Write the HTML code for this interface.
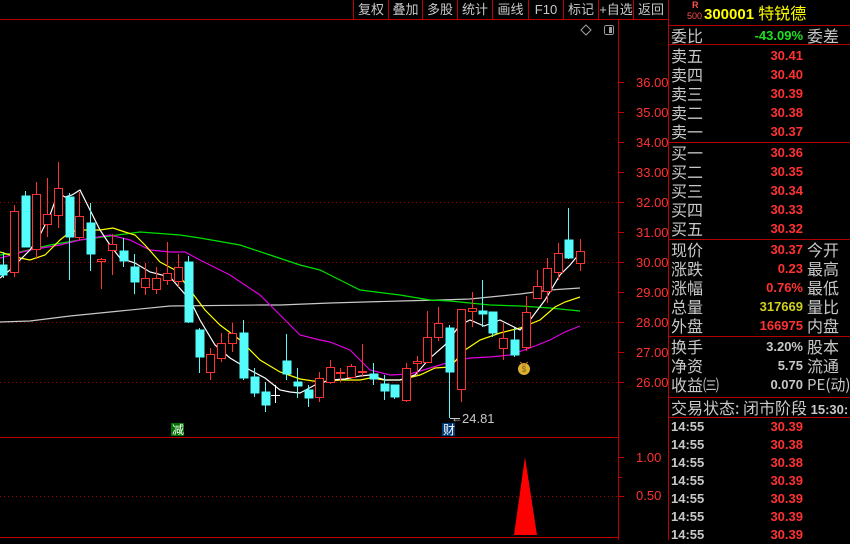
<!DOCTYPE html>
<html><head><meta charset="utf-8"><style>
body{margin:0;background:#000;width:850px;height:540px;overflow:hidden;position:relative;font-family:"Liberation Sans","Noto Sans CJK SC",sans-serif}
.t{position:absolute;white-space:nowrap}
.l{position:absolute;left:671px;color:#c8c8c8;font-size:16px;line-height:19px;font-family:"Noto Sans CJK SC","WenQuanYi Zen Hei",sans-serif}
.v{position:absolute;right:47px;font-size:13px;font-weight:bold;line-height:19px;color:#ff3232;text-align:right}
.r{position:absolute;left:807px;color:#c8c8c8;font-size:16px;line-height:19px;font-family:"Noto Sans CJK SC",sans-serif}
.hl{position:absolute;left:669px;width:181px;height:1px;background:#b00000}
.btn{position:absolute;top:0;height:19px;line-height:19px;color:#c8c8c8;font-size:13px;text-align:center;border-left:1px solid #c00000;font-family:"Liberation Sans","Noto Sans CJK SC",sans-serif}
.ax{position:absolute;left:636px;color:#ff3232;font-size:13px;line-height:14px}
.tk{position:absolute;left:671px;color:#c8c8c8;font-size:13px;font-weight:bold;line-height:18px}
.tv{position:absolute;right:47px;color:#ff3232;font-size:13px;font-weight:bold;line-height:18px}
</style></head><body>
<svg width="850" height="540" style="position:absolute;left:0;top:0" shape-rendering="crispEdges">
<line x1="0" y1="19.5" x2="668" y2="19.5" stroke="#c00000"/>
<line x1="618.5" y1="20" x2="618.5" y2="540" stroke="#c00000"/>
<line x1="668.5" y1="0" x2="668.5" y2="540" stroke="#c00000"/>
<line x1="0" y1="437.5" x2="618" y2="437.5" stroke="#c00000"/>
<line x1="0" y1="537.5" x2="618" y2="537.5" stroke="#c00000"/>
<g stroke="#a00000" stroke-dasharray="1,3">
<line x1="0" y1="202.5" x2="618" y2="202.5"/><line x1="0" y1="262.5" x2="618" y2="262.5"/>
<line x1="0" y1="322.5" x2="618" y2="322.5"/><line x1="0" y1="382.5" x2="618" y2="382.5"/>
<line x1="0" y1="496.5" x2="618" y2="496.5"/>
</g>
<g stroke="#c00000">
<line x1="618" y1="82.5" x2="624" y2="82.5"/><line x1="618" y1="112.5" x2="624" y2="112.5"/><line x1="618" y1="142.5" x2="624" y2="142.5"/><line x1="618" y1="172.5" x2="624" y2="172.5"/><line x1="618" y1="202.5" x2="624" y2="202.5"/><line x1="618" y1="232.5" x2="624" y2="232.5"/><line x1="618" y1="262.5" x2="624" y2="262.5"/><line x1="618" y1="292.5" x2="624" y2="292.5"/><line x1="618" y1="322.5" x2="624" y2="322.5"/><line x1="618" y1="352.5" x2="624" y2="352.5"/><line x1="618" y1="382.5" x2="624" y2="382.5"/>
<line x1="618" y1="457.5" x2="624" y2="457.5"/><line x1="618" y1="477.5" x2="622" y2="477.5"/><line x1="618" y1="496.5" x2="624" y2="496.5"/>
</g>
<g fill="none" shape-rendering="auto" stroke-width="1.2">
<polyline stroke="#c8c8c8" points="0,322 30,321 70,316 120,311 170,306 260,305 280,305 330,303 400,301 440,300 470,299 500,296 520,294 550,290 580,288"/>
<polyline stroke="#00e000" points="0,255 20,252 50,245 80,240 140,232 180,235 200,238 240,245 270,255 300,265 320,270 340,280 360,290 400,295 430,300 450,301 470,303 490,305 520,306 550,308 580,311"/>
<polyline stroke="#e000e0" points="0,258 30,250 60,245 80,240 110,235 130,240 150,250 170,252 185,252 200,260 230,275 260,295 280,315 300,335 320,340 330,342 350,350 370,370 390,375 410,374 430,368 450,362 470,358 490,357 510,355 530,348 550,340 565,332 580,326"/>
<polyline stroke="#ffff00" points="0,252 20,258 30,260 45,255 60,240 70,232 80,230 100,230 113,228 125,232 135,235 145,245 160,262 175,270 190,290 205,310 220,325 240,340 260,360 280,372 300,379 320,382 340,380 360,380 370,378 385,380 400,380 420,375 435,368 450,367 465,350 480,340 500,333 520,328 540,320 555,307 565,302 580,297"/>
<polyline stroke="#ffffff" points="0,278 10,270 20,260 30,250 40,235 50,215 58,193 65,197 72,195 80,190 90,210 100,230 110,245 120,258 135,263 150,272 170,277 190,300 200,320 215,345 230,358 250,370 265,378 280,390 290,392 300,393 315,385 330,380 345,379 360,376 370,375 385,380 400,380 415,375 430,358 445,345 460,325 470,320 484,326 500,320 510,325 520,330 530,320 545,300 560,275 570,265 580,253"/>
</g>
<g stroke="#54fcfc" fill="#54fcfc">
<line x1="3.5" y1="252" x2="3.5" y2="278"/><rect x="0" y="265" width="7" height="10"/>
<line x1="25.5" y1="191" x2="25.5" y2="247"/><rect x="22" y="196" width="8" height="51"/>
<line x1="69.5" y1="193" x2="69.5" y2="280"/><rect x="66" y="197" width="8" height="40"/>
<line x1="90.5" y1="203" x2="90.5" y2="271"/><rect x="87" y="223" width="8" height="31"/>
<line x1="123.5" y1="238" x2="123.5" y2="267"/><rect x="120" y="251" width="8" height="10"/>
<line x1="134.5" y1="254" x2="134.5" y2="294"/><rect x="131" y="267" width="8" height="15"/>
<line x1="188.5" y1="256" x2="188.5" y2="323"/><rect x="185" y="262" width="8" height="60"/>
<line x1="199.5" y1="328" x2="199.5" y2="373"/><rect x="196" y="330" width="8" height="27"/>
<line x1="243.5" y1="320" x2="243.5" y2="380"/><rect x="240" y="333" width="8" height="45"/>
<line x1="254.5" y1="368" x2="254.5" y2="397"/><rect x="251" y="377" width="8" height="16"/>
<line x1="265.5" y1="382" x2="265.5" y2="412"/><rect x="262" y="392" width="8" height="13"/>
<line x1="286.5" y1="334" x2="286.5" y2="380"/><rect x="283" y="361" width="8" height="13"/>
<line x1="297.5" y1="368" x2="297.5" y2="398"/><rect x="294" y="382" width="8" height="4"/>
<line x1="308.5" y1="385" x2="308.5" y2="407"/><rect x="305" y="390" width="8" height="8"/>
<line x1="373.5" y1="363" x2="373.5" y2="385"/><rect x="370" y="374" width="8" height="5"/>
<line x1="384.5" y1="375" x2="384.5" y2="400"/><rect x="381" y="384" width="8" height="7"/>
<line x1="394.5" y1="385" x2="394.5" y2="399"/><rect x="391" y="385" width="8" height="12"/>
<line x1="449.5" y1="325" x2="449.5" y2="418"/><rect x="446" y="328" width="8" height="44"/>
<line x1="482.5" y1="280" x2="482.5" y2="327"/><rect x="479" y="311" width="8" height="3"/>
<line x1="492.5" y1="312" x2="492.5" y2="337"/><rect x="489" y="312" width="8" height="21"/>
<line x1="514.5" y1="328" x2="514.5" y2="357"/><rect x="511" y="340" width="8" height="15"/>
<line x1="568.5" y1="208" x2="568.5" y2="259"/><rect x="565" y="240" width="8" height="18"/>
</g>
<g stroke="#ff3232" fill="#000">
<line x1="14.5" y1="205" x2="14.5" y2="277"/><rect x="10.5" y="211.5" width="8" height="61"/>
<line x1="36.5" y1="182" x2="36.5" y2="259"/><rect x="32.5" y="194.5" width="8" height="55"/>
<line x1="47.5" y1="178" x2="47.5" y2="237"/><rect x="43.5" y="214.5" width="8" height="10"/>
<line x1="58.5" y1="162" x2="58.5" y2="228"/><rect x="54.5" y="188.5" width="8" height="27"/>
<line x1="79.5" y1="192" x2="79.5" y2="240"/><rect x="75.5" y="216.5" width="8" height="21"/>
<line x1="101.5" y1="258" x2="101.5" y2="289"/><rect x="97.5" y="259.5" width="8" height="2"/>
<line x1="112.5" y1="234" x2="112.5" y2="275"/><rect x="108.5" y="244.5" width="8" height="6"/>
<line x1="145.5" y1="263" x2="145.5" y2="295"/><rect x="141.5" y="278.5" width="8" height="9"/>
<line x1="156.5" y1="267" x2="156.5" y2="294"/><rect x="152.5" y="278.5" width="8" height="11"/>
<line x1="167.5" y1="242" x2="167.5" y2="285"/><rect x="163.5" y="273.5" width="8" height="7"/>
<line x1="178.5" y1="254" x2="178.5" y2="287"/><rect x="174.5" y="267.5" width="8" height="14"/>
<line x1="210.5" y1="348" x2="210.5" y2="380"/><rect x="206.5" y="354.5" width="8" height="18"/>
<line x1="221.5" y1="333" x2="221.5" y2="362"/><rect x="217.5" y="343.5" width="8" height="15"/>
<line x1="232.5" y1="323" x2="232.5" y2="352"/><rect x="228.5" y="333.5" width="8" height="10"/>
<line x1="319.5" y1="372" x2="319.5" y2="402"/><rect x="315.5" y="378.5" width="8" height="19"/>
<line x1="330.5" y1="360" x2="330.5" y2="384"/><rect x="326.5" y="367.5" width="8" height="15"/>
<line x1="340.5" y1="368" x2="340.5" y2="382"/><rect x="336.5" y="372.5" width="8" height="1"/>
<line x1="351.5" y1="364" x2="351.5" y2="378"/><rect x="347.5" y="366.5" width="8" height="11"/>
<line x1="362.5" y1="344" x2="362.5" y2="377"/><rect x="358.5" y="371.5" width="8" height="1"/>
<line x1="406.5" y1="363" x2="406.5" y2="402"/><rect x="402.5" y="368.5" width="8" height="32"/>
<line x1="417.5" y1="356" x2="417.5" y2="375"/><rect x="413.5" y="361.5" width="8" height="2"/>
<line x1="427.5" y1="311" x2="427.5" y2="362"/><rect x="423.5" y="337.5" width="8" height="25"/>
<line x1="438.5" y1="307" x2="438.5" y2="341"/><rect x="434.5" y="323.5" width="8" height="14"/>
<line x1="461.5" y1="309" x2="461.5" y2="402"/><rect x="457.5" y="309.5" width="8" height="80"/>
<line x1="472.5" y1="292" x2="472.5" y2="327"/><rect x="468.5" y="308.5" width="8" height="3"/>
<line x1="503.5" y1="323" x2="503.5" y2="360"/><rect x="499.5" y="338.5" width="8" height="10"/>
<line x1="526.5" y1="296" x2="526.5" y2="351"/><rect x="522.5" y="312.5" width="8" height="35"/>
<line x1="537.5" y1="270" x2="537.5" y2="298"/><rect x="533.5" y="286.5" width="8" height="12"/>
<line x1="547.5" y1="258" x2="547.5" y2="303"/><rect x="543.5" y="268.5" width="8" height="23"/>
<line x1="558.5" y1="243" x2="558.5" y2="280"/><rect x="554.5" y="253.5" width="8" height="19"/>
<line x1="580.5" y1="239" x2="580.5" y2="271"/><rect x="576.5" y="251.5" width="8" height="12"/>
</g>
<g stroke="#fff"><line x1="275.5" y1="385" x2="275.5" y2="403"/><line x1="271" y1="395.5" x2="280" y2="395.5"/></g>
<line x1="450" y1="418.5" x2="460" y2="418.5" stroke="#c8c8c8"/>
<polygon points="525,457 537,535 514,535" fill="#ff0000" shape-rendering="auto"/>
<rect x="171" y="423" width="13" height="13" fill="#007000"/>
<rect x="442" y="423" width="13" height="13" fill="#003a7a"/>
<g shape-rendering="auto"><circle cx="524" cy="369" r="6" fill="#e0b030"/><path d="M520 362 l4 3 4 -3" stroke="#c08020" fill="none"/><text x="524" y="372" font-size="8" text-anchor="middle" fill="#806010" font-family="Liberation Sans">$</text></g>
<path d="M586 25 l5 5 -5 5 -5 -5z" fill="none" stroke="#a0a0a0" shape-rendering="auto"/>
<rect x="604.5" y="25.5" width="9" height="9" rx="2" fill="none" stroke="#a0a0a0"/><rect x="609" y="27" width="3" height="6" fill="#a0a0a0"/>
</svg>
<div class="t" style="left:172px;top:421px;font-size:12px;color:#fff">减</div>
<div class="t" style="left:443px;top:421px;font-size:12px;color:#fff">财</div>
<div class="t" style="left:462px;top:411px;font-size:13px;color:#c8c8c8">24.81</div>
<div class="t" style="left:451px;top:411px;font-size:12px;color:#c8c8c8">←</div>
<div class="ax" style="top:76px">36.00</div><div class="ax" style="top:106px">35.00</div><div class="ax" style="top:136px">34.00</div><div class="ax" style="top:166px">33.00</div><div class="ax" style="top:196px">32.00</div><div class="ax" style="top:226px">31.00</div><div class="ax" style="top:256px">30.00</div><div class="ax" style="top:286px">29.00</div><div class="ax" style="top:316px">28.00</div><div class="ax" style="top:346px">27.00</div><div class="ax" style="top:376px">26.00</div>
<div class="ax" style="top:451px">1.00</div><div class="ax" style="top:489px">0.50</div>
<div class="btn" style="left:353px;width:34px">复权</div><div class="btn" style="left:388px;width:33px">叠加</div><div class="btn" style="left:422px;width:34px">多股</div><div class="btn" style="left:457px;width:34px">统计</div><div class="btn" style="left:492px;width:35px">画线</div><div class="btn" style="left:528px;width:34px">F10</div><div class="btn" style="left:563px;width:34px">标记</div><div class="btn" style="left:598px;width:34px">+自选</div><div class="btn" style="left:633px;width:34px">返回</div>
<div class="t" style="left:692px;top:1px;font-size:9px;font-weight:bold;color:#ff5050;line-height:9px">R</div>
<div class="t" style="left:687px;top:12px;font-size:9px;color:#ff5050;line-height:9px">500</div>
<div class="t" style="left:704px;top:2px;font-size:15px;font-weight:bold;color:#ffff00;line-height:20px">300001 <span style="font-weight:normal;font-size:16px;font-family:'Noto Sans CJK SC',sans-serif">特锐德</span></div>
<div class="hl" style="top:25px"></div><div class="hl" style="top:44px"></div><div class="hl" style="top:142px"></div><div class="hl" style="top:239px"></div><div class="hl" style="top:336px"></div><div class="hl" style="top:397px"></div><div class="hl" style="top:417px"></div>
<div class="l" style="top:26px">委比</div><div class="v" style="top:26px;color:#20e020">-43.09%</div><div class="r" style="top:26px">委差</div>
<div class="l" style="top:46px">卖五</div><div class="v" style="top:46px">30.41</div>
<div class="l" style="top:65px">卖四</div><div class="v" style="top:65px">30.40</div>
<div class="l" style="top:84px">卖三</div><div class="v" style="top:84px">30.39</div>
<div class="l" style="top:103px">卖二</div><div class="v" style="top:103px">30.38</div>
<div class="l" style="top:122px">卖一</div><div class="v" style="top:122px">30.37</div>
<div class="l" style="top:143px">买一</div><div class="v" style="top:143px">30.36</div>
<div class="l" style="top:162px">买二</div><div class="v" style="top:162px">30.35</div>
<div class="l" style="top:181px">买三</div><div class="v" style="top:181px">30.34</div>
<div class="l" style="top:200px">买四</div><div class="v" style="top:200px">30.33</div>
<div class="l" style="top:219px">买五</div><div class="v" style="top:219px">30.32</div>
<div class="l" style="top:240px">现价</div><div class="v" style="top:240px">30.37</div><div class="r" style="top:240px">今开</div>
<div class="l" style="top:259px">涨跌</div><div class="v" style="top:259px">0.23</div><div class="r" style="top:259px">最高</div>
<div class="l" style="top:278px">涨幅</div><div class="v" style="top:278px">0.76%</div><div class="r" style="top:278px">最低</div>
<div class="l" style="top:297px">总量</div><div class="v" style="top:297px;color:#d0d020">317669</div><div class="r" style="top:297px">量比</div>
<div class="l" style="top:316px">外盘</div><div class="v" style="top:316px">166975</div><div class="r" style="top:316px">内盘</div>
<div class="l" style="top:337px">换手</div><div class="v" style="top:337px;color:#c8c8c8">3.20%</div><div class="r" style="top:337px">股本</div>
<div class="l" style="top:356px">净资</div><div class="v" style="top:356px;color:#c8c8c8">5.75</div><div class="r" style="top:356px">流通</div>
<div class="l" style="top:375px">收益㈢</div><div class="v" style="top:375px;color:#c8c8c8">0.070</div><div class="r" style="top:375px;font-size:15px">PE(动)</div>
<div class="l" style="top:398px">交易状态: 闭市阶段 <span style="font-family:'Liberation Sans';font-weight:bold;font-size:13px">15:30:</span></div>
<div class="tk" style="top:418px">14:55</div><div class="tv" style="top:418px">30.39</div>
<div class="tk" style="top:436px">14:55</div><div class="tv" style="top:436px">30.38</div>
<div class="tk" style="top:454px">14:55</div><div class="tv" style="top:454px">30.38</div>
<div class="tk" style="top:472px">14:55</div><div class="tv" style="top:472px">30.39</div>
<div class="tk" style="top:490px">14:55</div><div class="tv" style="top:490px">30.39</div>
<div class="tk" style="top:508px">14:55</div><div class="tv" style="top:508px">30.39</div>
<div class="tk" style="top:526px">14:55</div><div class="tv" style="top:526px">30.39</div>
</body></html>
